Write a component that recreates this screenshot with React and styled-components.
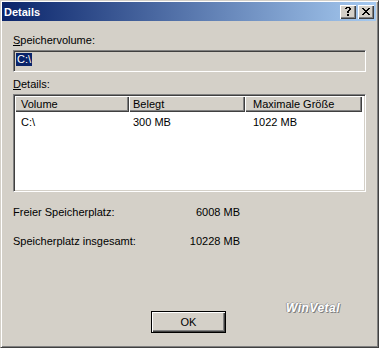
import React from 'react';
import styled, { createGlobalStyle } from 'styled-components';

const Global = createGlobalStyle`
  html, body { margin: 0; padding: 0; background: #d4d0c8; }
  body { font-family: "Liberation Sans", Arial, sans-serif; font-size: 11px; color: #000; }
  * { box-sizing: border-box; }
`;

const Window = styled.div`
  width: 379px;
  height: 348px;
  display: flex;
  flex-direction: column;
  background: #d4d0c8;
  border: 1px solid;
  border-color: #d4d0c8 #404040 #404040 #d4d0c8;
  box-shadow: inset 1px 1px 0 #fff, inset -1px -1px 0 #808080;
  padding: 1px 2px 2px 1px;
`;

const TitleBar = styled.div`
  height: 19px;
  display: flex;
  align-items: center;
  padding: 0 2px 0 2px;
  background: linear-gradient(to right, #0a246a, #a6caf0);
  color: #fff;
  font-weight: bold;
  font-size: 11px;
  line-height: 13px;
`;

const Title = styled.span`
  flex: 1;
  padding-top: 1px;
`;

const CaptionButtons = styled.div`
  display: flex;
  gap: 2px;
  margin-top: 1px;
`;

const CaptionButton = styled.div`
  width: 16px;
  height: 14px;
  background: #d4d0c8;
  box-shadow: inset 1px 1px 0 #fff, inset -1px -1px 0 #404040, inset -2px -2px 0 #808080;
  display: flex;
  align-items: center;
  justify-content: center;
  padding: 0 1px 1px 0;
  svg { display: block; shape-rendering: crispEdges; }
`;

const Body = styled.div`
  flex: 1;
  display: flex;
  flex-direction: column;
  padding: 13px 10px 12px 11px;
`;

const Label = styled.div`
  line-height: 13px;
  margin-top: ${p => p.$gap || 0}px;
  u { text-decoration: underline; }
`;

const Field = styled.div`
  margin-top: 3px;
  height: 22px;
  border: 1px solid;
  border-color: #808080 #fff #fff #808080;
  box-shadow: inset 1px 1px 0 #404040, inset -1px -1px 0 #d4d0c8;
  padding: 2px 0 0 2px;
  background: #d4d0c8;
`;

const Selected = styled.span`
  display: inline-block;
  background: #0a246a;
  color: #fff;
  line-height: 13px;
  padding: 0 1px;
`;

const ListBox = styled.div`
  margin-top: 3px;
  height: 98px;
  border: 1px solid;
  border-color: #808080 #fff #fff #808080;
  box-shadow: inset 1px 1px 0 #404040, inset -1px -1px 0 #d4d0c8;
  padding: 1px;
  background: #fff;
`;

const Columns = styled.div`
  display: grid;
  grid-template-columns: 114px 116px 117px;
`;

const HeaderCell = styled.div`
  height: 16px;
  background: #d4d0c8;
  box-shadow: inset 1px 1px 0 #fff, inset -1px -1px 0 #404040, inset -2px -2px 0 #808080;
  line-height: 13px;
  padding: 2px 0 0 ${p => p.$pad}px;
  white-space: nowrap;
`;

const DataCell = styled.div`
  line-height: 13px;
  padding: 4px 0 0 ${p => p.$pad}px;
  white-space: nowrap;
`;

const Stats = styled.div`
  margin-top: 14px;
  display: flex;
  flex-direction: column;
  gap: 16px;
`;

const StatRow = styled.div`
  display: grid;
  grid-template-columns: 160px 67px;
  line-height: 13px;
`;

const StatValue = styled.span`
  text-align: right;
`;

const Footer = styled.div`
  margin-top: auto;
  display: flex;
  align-items: flex-end;
`;

const OkButton = styled.button`
  margin-left: 138px;
  width: 75px;
  height: 22px;
  padding: 0 0 1px 0;
  font-family: inherit;
  font-size: 11px;
  color: #000;
  background: #d4d0c8;
  border: 1px solid #000;
  box-shadow: inset 1px 1px 0 #fff, inset -1px -1px 0 #404040, inset -2px -2px 0 #808080;
`;

const Logo = styled.span`
  margin-left: 60px;
  margin-bottom: 19px;
  font-size: 12px;
  line-height: 12px;
  font-weight: bold;
  font-style: italic;
  letter-spacing: 0.5px;
  color: #fff;
  text-shadow: 1px 1px 0 #808080, -1px 0 0 #9a9a9a, 0 -1px 0 #b0b0b0;
`;

const px = (rows, color) =>
  rows.flatMap((r, y) =>
    r.split('').map((c, x) => (c === 'X' ? <rect key={`${x}-${y}`} x={x} y={y} width="1" height="1" fill={color} /> : null))
  );

const HelpGlyph = () => (
  <svg width="6" height="9" viewBox="0 0 6 9">
    {px([
      '.XXXX.',
      'XX..XX',
      '....XX',
      '...XX.',
      '..XX..',
      '..XX..',
      '......',
      '..XX..',
      '..XX..',
    ], '#000')}
  </svg>
);

const CloseGlyph = () => (
  <svg width="8" height="7" viewBox="0 0 8 7">
    {px([
      'XX....XX',
      '.XX..XX.',
      '..XXXX..',
      '...XX...',
      '..XXXX..',
      '.XX..XX.',
      'XX....XX',
    ], '#000')}
  </svg>
);

const pads = [6, 4, 8];
const headers = ['Volume', 'Belegt', 'Maximale Größe'];
const row = ['C:\\', '300 MB', '1022 MB'];

export default function App() {
  return (
    <>
      <Global />
      <Window>
        <TitleBar>
          <Title>Details</Title>
          <CaptionButtons>
            <CaptionButton><HelpGlyph /></CaptionButton>
            <CaptionButton><CloseGlyph /></CaptionButton>
          </CaptionButtons>
        </TitleBar>
        <Body>
          <Label><u>S</u>peichervolume:</Label>
          <Field><Selected>C:\</Selected></Field>
          <Label $gap={6}><u>D</u>etails:</Label>
          <ListBox>
            <Columns>
              {headers.map((h, i) => <HeaderCell key={h} $pad={pads[i]}>{h}</HeaderCell>)}
            </Columns>
            <Columns>
              {row.map((c, i) => <DataCell key={i} $pad={pads[i]}>{c}</DataCell>)}
            </Columns>
          </ListBox>
          <Stats>
            <StatRow><span>Freier Speicherplatz:</span><StatValue>6008 MB</StatValue></StatRow>
            <StatRow><span>Speicherplatz insgesamt:</span><StatValue>10228 MB</StatValue></StatRow>
          </Stats>
          <Footer>
            <OkButton>OK</OkButton>
            <Logo>WinVetal</Logo>
          </Footer>
        </Body>
      </Window>
    </>
  );
}
